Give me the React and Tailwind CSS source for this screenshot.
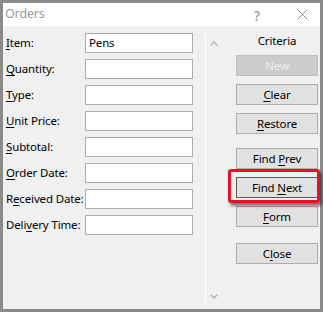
import React from 'react'

const fields = [
    { pre: '', key: 'I', post: 'tem:', value: 'Pens' },
    { pre: '', key: 'Q', post: 'uantity:' },
    { pre: '', key: 'T', post: 'ype:' },
    { pre: '', key: 'U', post: 'nit Price:' },
    { pre: '', key: 'S', post: 'ubtotal:' },
    { pre: '', key: 'O', post: 'rder Date:' },
    { pre: 'R', key: 'e', post: 'ceived Date:' },
    { pre: 'Deli', key: 'v', post: 'ery Time:' },
]

function Btn({ pre = '', k = '', post = '', className = '', disabled, focused }) {
    return (
        <div
            className={`h-[21px] w-[82px] flex items-center justify-center border leading-none
                ${disabled ? 'bg-[#cccccc] border-[#bfbfbf] text-[#ececec]' : 'bg-[#e1e1e1] text-[#000]'}
                ${focused ? 'border-[#5a5a5a]' : disabled ? '' : 'border-[#adadad]'} ${className}`}
        >
            <span>
                {pre}
                {k && <u className="underline-offset-2">{k}</u>}
                {post}
            </span>
        </div>
    )
}

export default function App() {
    return (
        <div className="w-[323px] h-[312px] bg-[#8a8a8a] p-[3px] font-['Noto_Sans',sans-serif] text-[11.5px] tracking-[-0.15px]">
            <div className="w-full h-full flex flex-col bg-[#f0f0f0]">
                {/* TITLE BAR */}
                <div className="h-[23px] bg-white flex items-center relative">
                    <span className="pl-[2px] text-[12.5px] text-[#9a9a9a]">Orders</span>
                    <span className="absolute left-[251px] top-[3px] text-[13.5px] text-[#8a8a8a]">?</span>
                    <svg className="absolute left-[294px] top-[6px]" width="11" height="11" viewBox="0 0 11 11">
                        <path d="M0.5 0.5 L10.5 10.5 M10.5 0.5 L0.5 10.5" stroke="#8a8a8a" strokeWidth="1" />
                    </svg>
                </div>

                {/* BODY */}
                <div className="flex flex-1">
                    {/* FIELDS */}
                    <div className="w-[202px] pt-[7px] pl-[3px] flex flex-col gap-[6px]">
                        {fields.map((f, i) => (
                            <div key={i} className="flex items-center h-[20px]">
                                <span className="w-[79px] text-black whitespace-nowrap">
                                    {f.pre}
                                    <u className="underline-offset-2">{f.key}</u>
                                    {f.post}
                                </span>
                                <div className="w-[108px] h-[20px] bg-white border border-[#adadad] flex items-center px-[3px] text-black">
                                    {f.value}
                                </div>
                            </div>
                        ))}
                    </div>

                    {/* SEPARATOR */}
                    <div className="w-[1px] bg-white mt-[7px] h-[270px]" />

                    {/* SCROLL ARROWS */}
                    <div className="w-[30px] flex flex-col justify-between pt-[15px] pb-[10px] pl-[4px]">
                        <svg width="8" height="5" viewBox="0 0 8 5">
                            <path d="M0.5 4.5 L4 1 L7.5 4.5" stroke="#b4b4b4" strokeWidth="1.5" fill="none" />
                        </svg>
                        <svg width="8" height="5" viewBox="0 0 8 5">
                            <path d="M0.5 0.5 L4 4 L7.5 0.5" stroke="#b4b4b4" strokeWidth="1.5" fill="none" />
                        </svg>
                    </div>

                    {/* BUTTONS */}
                    <div className="w-[82px] pt-[7px] flex flex-col">
                        <div className="h-[16px] flex items-center justify-center text-black">Criteria</div>
                        <Btn className="mt-[6px]" post="New" disabled />
                        <Btn className="mt-[8px]" k="C" post="lear" />
                        <Btn className="mt-[8px]" k="R" post="estore" />
                        <Btn className="mt-[14px]" pre="Find " k="P" post="rev" />
                        <div className="relative mt-[8px]">
                            <div className="absolute left-[-8px] top-[-8px] w-[92px] h-[34px] border-[3px] border-[#e81123] rounded-[3px] shadow-[2px_3px_3px_rgba(0,0,0,0.5)]" />
                            <Btn pre="Find " k="N" post="ext" focused />
                        </div>
                        <Btn className="mt-[8px]" k="F" post="orm" />
                        <Btn className="mt-[16px]" pre="C" k="l" post="ose" />
                    </div>
                </div>
            </div>
        </div>
    )
}
